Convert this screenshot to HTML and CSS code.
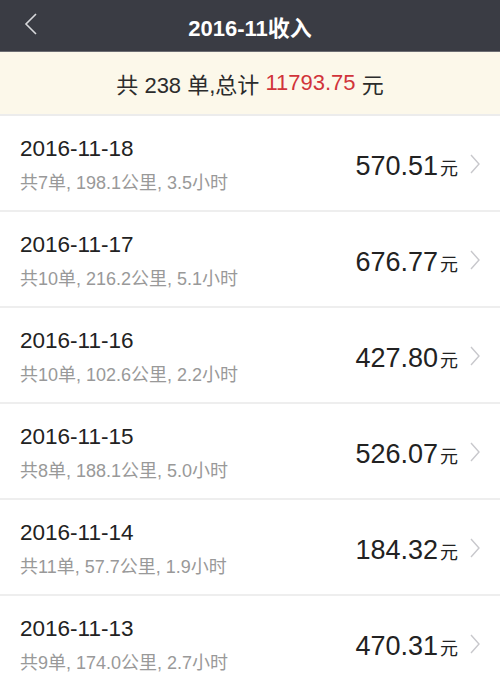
FILE: index.html
```html
<!DOCTYPE html>
<html lang="zh-CN">
<head>
  <meta charset="UTF-8">
  <meta name="viewport" content="width=device-width, initial-scale=1.0">
  <title>2016-11收入</title>
  <link rel="stylesheet" href="styles.css">
</head>
<body>
  <div class="topbar">
    <span class="back">
      <svg width="14" height="24" viewBox="0 0 14 24"><path d="M12 2 L2 12 L12 22" fill="none" stroke="#d8d9dc" stroke-width="1.6"/></svg>
    </span>
    <h1>2016-11收入</h1>
  </div>

  <div class="summary">共 238 单,总计 <span class="total">11793.75</span> 元</div>

  <ul class="days">
    <li class="day">
      <div class="info">
        <div class="date">2016-11-18</div>
        <div class="meta">共7单, 198.1公里, 3.5小时</div>
      </div>
      <div class="amount">570.51<span class="unit">元</span></div>
      <svg class="arrow" width="10" height="20" viewBox="0 0 10 20"><path d="M1 1 L9 10 L1 19" fill="none" stroke="#c8c8cc" stroke-width="1.4"/></svg>
    </li>
    <li class="day">
      <div class="info">
        <div class="date">2016-11-17</div>
        <div class="meta">共10单, 216.2公里, 5.1小时</div>
      </div>
      <div class="amount">676.77<span class="unit">元</span></div>
      <svg class="arrow" width="10" height="20" viewBox="0 0 10 20"><path d="M1 1 L9 10 L1 19" fill="none" stroke="#c8c8cc" stroke-width="1.4"/></svg>
    </li>
    <li class="day">
      <div class="info">
        <div class="date">2016-11-16</div>
        <div class="meta">共10单, 102.6公里, 2.2小时</div>
      </div>
      <div class="amount">427.80<span class="unit">元</span></div>
      <svg class="arrow" width="10" height="20" viewBox="0 0 10 20"><path d="M1 1 L9 10 L1 19" fill="none" stroke="#c8c8cc" stroke-width="1.4"/></svg>
    </li>
    <li class="day">
      <div class="info">
        <div class="date">2016-11-15</div>
        <div class="meta">共8单, 188.1公里, 5.0小时</div>
      </div>
      <div class="amount">526.07<span class="unit">元</span></div>
      <svg class="arrow" width="10" height="20" viewBox="0 0 10 20"><path d="M1 1 L9 10 L1 19" fill="none" stroke="#c8c8cc" stroke-width="1.4"/></svg>
    </li>
    <li class="day">
      <div class="info">
        <div class="date">2016-11-14</div>
        <div class="meta">共11单, 57.7公里, 1.9小时</div>
      </div>
      <div class="amount">184.32<span class="unit">元</span></div>
      <svg class="arrow" width="10" height="20" viewBox="0 0 10 20"><path d="M1 1 L9 10 L1 19" fill="none" stroke="#c8c8cc" stroke-width="1.4"/></svg>
    </li>
    <li class="day">
      <div class="info">
        <div class="date">2016-11-13</div>
        <div class="meta">共9单, 174.0公里, 2.7小时</div>
      </div>
      <div class="amount">470.31<span class="unit">元</span></div>
      <svg class="arrow" width="10" height="20" viewBox="0 0 10 20"><path d="M1 1 L9 10 L1 19" fill="none" stroke="#c8c8cc" stroke-width="1.4"/></svg>
    </li>
  </ul>
</body>
</html>
```

FILE: styles.css
```css
body {
  margin: 0;
  background-color: #ffffff;
  color: #222;
  font-family: "Liberation Sans", "Noto Sans CJK SC", sans-serif;
  overflow: hidden;
}
.topbar {
  height: 51px;
  background-color: #3a3c44;
  border-bottom: 1px solid #6c6d72;
  display: flex;
  align-items: center;
  justify-content: center;
  position: relative;
}
.topbar h1 {
  margin: 0;
  color: #ffffff;
  font-size: 22px;
  font-weight: bold;
}
.back {
  position: absolute;
  left: 24px;
  top: 12px;
}
.summary {
  height: 62px;
  background-color: #fcf8ea;
  border-bottom: 2px solid #ececec;
  display: flex;
  align-items: center;
  justify-content: center;
  font-size: 22px;
  color: #2c2c2c;
  white-space: pre;
}
.total {
  color: #d1343a;
}
.days {
  list-style: none;
  margin: 0;
  padding: 0;
}
.day {
  height: 94px;
  border-bottom: 2px solid #eeeeee;
  display: flex;
  align-items: center;
  padding: 0 20px;
}
.info {
  flex: 1;
  padding-top: 4px;
}
.date {
  font-size: 22.5px;
  line-height: 26px;
  color: #222;
}
.meta {
  margin-top: 9px;
  font-size: 18px;
  line-height: 24px;
  color: #999;
}
.amount {
  font-size: 27px;
  color: #222;
  padding-top: 6px;
}
.unit {
  font-size: 18px;
  margin-left: 2px;
}
.arrow {
  margin-left: 12px;
  margin-top: 2px;
}
```
